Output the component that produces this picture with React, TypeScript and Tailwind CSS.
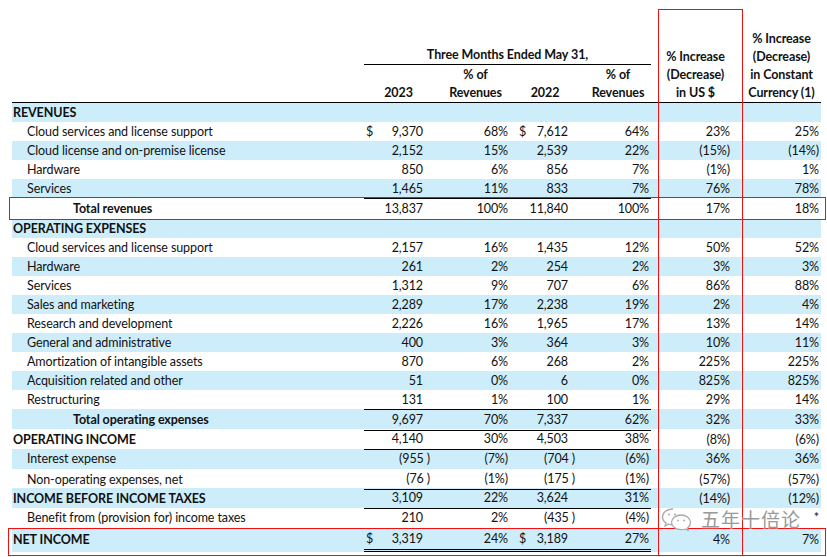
import React from 'react';

type Row = {
  label: string;
  kind: 'section' | 'item' | 'total';
  blue: boolean;
  h: string;
  v23?: string;
  p23?: string;
  v22?: string;
  p22?: string;
  us?: string;
  cc?: string;
  dollar?: boolean;
  top?: boolean;
  bottom?: boolean;
  double?: boolean;
};

const rows: Row[] = [
  { label: 'REVENUES', kind: 'section', blue: true, h: 'h-[19px]' },
  { label: 'Cloud services and license support', kind: 'item', blue: false, h: 'h-[19px]', v23: '9,370', p23: '68%', v22: '7,612', p22: '64%', us: '23%', cc: '25%', dollar: true },
  { label: 'Cloud license and on-premise license', kind: 'item', blue: true, h: 'h-[19px]', v23: '2,152', p23: '15%', v22: '2,539', p22: '22%', us: '(15%)', cc: '(14%)' },
  { label: 'Hardware', kind: 'item', blue: false, h: 'h-[19px]', v23: '850', p23: '6%', v22: '856', p22: '7%', us: '(1%)', cc: '1%' },
  { label: 'Services', kind: 'item', blue: true, h: 'h-[19px]', v23: '1,465', p23: '11%', v22: '833', p22: '7%', us: '76%', cc: '78%' },
  { label: 'Total revenues', kind: 'total', blue: false, h: 'h-[21px]', v23: '13,837', p23: '100%', v22: '11,840', p22: '100%', us: '17%', cc: '18%', top: true, bottom: true },
  { label: 'OPERATING EXPENSES', kind: 'section', blue: true, h: 'h-[19px]' },
  { label: 'Cloud services and license support', kind: 'item', blue: false, h: 'h-[19px]', v23: '2,157', p23: '16%', v22: '1,435', p22: '12%', us: '50%', cc: '52%' },
  { label: 'Hardware', kind: 'item', blue: true, h: 'h-[19px]', v23: '261', p23: '2%', v22: '254', p22: '2%', us: '3%', cc: '3%' },
  { label: 'Services', kind: 'item', blue: false, h: 'h-[19px]', v23: '1,312', p23: '9%', v22: '707', p22: '6%', us: '86%', cc: '88%' },
  { label: 'Sales and marketing', kind: 'item', blue: true, h: 'h-[19px]', v23: '2,289', p23: '17%', v22: '2,238', p22: '19%', us: '2%', cc: '4%' },
  { label: 'Research and development', kind: 'item', blue: false, h: 'h-[19px]', v23: '2,226', p23: '16%', v22: '1,965', p22: '17%', us: '13%', cc: '14%' },
  { label: 'General and administrative', kind: 'item', blue: true, h: 'h-[19px]', v23: '400', p23: '3%', v22: '364', p22: '3%', us: '10%', cc: '11%' },
  { label: 'Amortization of intangible assets', kind: 'item', blue: false, h: 'h-[19px]', v23: '870', p23: '6%', v22: '268', p22: '2%', us: '225%', cc: '225%' },
  { label: 'Acquisition related and other', kind: 'item', blue: true, h: 'h-[19px]', v23: '51', p23: '0%', v22: '6', p22: '0%', us: '825%', cc: '825%' },
  { label: 'Restructuring', kind: 'item', blue: false, h: 'h-[19px]', v23: '131', p23: '1%', v22: '100', p22: '1%', us: '29%', cc: '14%' },
  { label: 'Total operating expenses', kind: 'total', blue: true, h: 'h-[20px]', v23: '9,697', p23: '70%', v22: '7,337', p22: '62%', us: '32%', cc: '33%', top: true, bottom: true },
  { label: 'OPERATING INCOME', kind: 'section', blue: false, h: 'h-[20px]', v23: '4,140', p23: '30%', v22: '4,503', p22: '38%', us: '(8%)', cc: '(6%)', bottom: true },
  { label: 'Interest expense', kind: 'item', blue: true, h: 'h-[20px]', v23: '(955', p23: '(7%)', v22: '(704', p22: '(6%)', us: '36%', cc: '36%' },
  { label: 'Non-operating expenses, net', kind: 'item', blue: false, h: 'h-[19px]', v23: '(76', p23: '(1%)', v22: '(175', p22: '(1%)', us: '(57%)', cc: '(57%)', bottom: true },
  { label: 'INCOME BEFORE INCOME TAXES', kind: 'section', blue: true, h: 'h-[20px]', v23: '3,109', p23: '22%', v22: '3,624', p22: '31%', us: '(14%)', cc: '(12%)', bottom: true },
  { label: 'Benefit from (provision for) income taxes', kind: 'item', blue: false, h: 'h-[20px]', v23: '210', p23: '2%', v22: '(435', p22: '(4%)', us: '', cc: '*' },
  { label: 'NET INCOME', kind: 'section', blue: true, h: 'h-[24px]', v23: '3,319', p23: '24%', v22: '3,189', p22: '27%', us: '4%', cc: '7%', dollar: true, double: true },
];

const cols = 'grid grid-cols-[352px_66px_85px_60px_76px_91px_79px]';

function clsx(...a: (string | false | undefined)[]) {
  return a.filter(Boolean).join(' ');
}

// accounting-style negatives: closing paren hangs past the digits
function Amount({ v }: { v?: string }) {
  if (!v) return null;
  if (v.startsWith('(')) {
    return (
      <span>
        {v}
        <span className="ml-[3px] -mr-[7px]">)</span>
      </span>
    );
  }
  return <span>{v}</span>;
}

function TableRow({ r }: { r: Row }) {
  const line = clsx(
    r.top && 'border-t border-black',
    r.bottom && 'border-b border-black',
    r.double && 'border-b-[3px] border-double border-black'
  );
  return (
    <div className={clsx(cols, r.h, r.blue ? 'bg-[#cdedfb]' : 'bg-white')}>
      <div
        className={clsx(
          'flex items-center whitespace-nowrap pt-[1px]',
          r.kind === 'section' && 'pl-[1px] font-bold',
          r.kind === 'item' && 'pl-[15px]',
          r.kind === 'total' && 'pl-[61px] font-bold'
        )}
      >
        {r.label}
      </div>
      <div className={clsx('flex items-center justify-between pl-[2px] pr-[7px] pt-[1px]', line)}>
        <span>{r.dollar ? '$' : ''}</span>
        <Amount v={r.v23} />
      </div>
      <div className={clsx('flex items-center justify-end pr-[7px] pt-[1px]', line)}>{r.p23}</div>
      <div className={clsx('flex items-center justify-between pl-[4px] pr-[7px] pt-[1px]', line)}>
        <span>{r.dollar ? '$' : ''}</span>
        <Amount v={r.v22} />
      </div>
      <div className={clsx('flex items-center justify-end pr-[2px] pt-[1px]', line)}>{r.p22}</div>
      <div className="flex items-center justify-end pr-[12px] pt-[1px]">{r.us}</div>
      <div className="flex items-center justify-end pr-[2px] pt-[1px]">{r.cc}</div>
    </div>
  );
}

function WeChatMark() {
  return (
    <svg width="32" height="24" viewBox="0 0 32 24" fill="none" stroke="#a8a8a8" strokeWidth="1.3">
      <path d="M12 2C6 2 1.5 5.6 1.5 10c0 2.5 1.4 4.6 3.6 6l-1 3 3.4-1.8c1.4.4 2.9.6 4.5.6" fill="#ffffff" />
      <path d="M20 8c5.2 0 9.5 3.3 9.5 7.5 0 2.2-1.2 4.1-3 5.5l.8 2.5-2.9-1.5c-1.4.4-2.8.6-4.4.6-5.2 0-9.5-3.3-9.5-7.1S14.8 8 20 8z" fill="#ffffff" />
      <circle cx="8" cy="7.5" r="1" fill="#a8a8a8" stroke="none" />
      <circle cx="14" cy="7.5" r="1" fill="#a8a8a8" stroke="none" />
      <circle cx="17" cy="13.5" r="0.9" fill="#a8a8a8" stroke="none" />
      <circle cx="23" cy="13.5" r="0.9" fill="#a8a8a8" stroke="none" />
    </svg>
  );
}

export default function App() {
  return (
    <div className="relative h-[557px] w-[827px] overflow-hidden bg-white font-['Lato',sans-serif] text-[12.5px] tracking-[-0.1px] text-[#111111]">
      <div className="ml-[12px] w-[809px]">
        {/* header */}
        <div className={clsx(cols, 'h-[103px] items-end border-b border-black font-bold leading-[18px]')}>
          <div />
          <div className="col-span-4 flex flex-col">
            <div className="border-b border-black pt-[1px] text-center">Three Months Ended May 31,</div>
            <div className="grid grid-cols-[66px_85px_60px_76px] pt-[1px]">
              <div className="flex flex-col items-center justify-end pl-[3px]">2023</div>
              <div className="flex flex-col items-center pl-[6px]">
                <span>% of</span>
                <span>Revenues</span>
              </div>
              <div className="flex flex-col items-center justify-end">2022</div>
              <div className="flex flex-col items-center pl-[10px]">
                <span>% of</span>
                <span>Revenues</span>
              </div>
            </div>
          </div>
          <div className="flex flex-col items-center pr-[2px]">
            <span>% Increase</span>
            <span>(Decrease)</span>
            <span>in US $</span>
          </div>
          <div className="flex flex-col items-center">
            <span>% Increase</span>
            <span>(Decrease)</span>
            <span>in Constant</span>
            <span>Currency (1)</span>
          </div>
        </div>
        {rows.map((r, i) => (
          <TableRow key={i} r={r} />
        ))}
      </div>

      {/* red highlight boxes */}
      <div className="absolute left-[658px] top-[9px] h-[547px] w-[85px] border border-[#f01010]" />
      <div className="absolute left-[9px] top-[197px] h-[23px] w-[817px] border border-[#f01010]" />
      <div className="absolute left-[8px] top-[528px] h-[28px] w-[818px] border border-[#f01010]" />

      {/* watermark */}
      <div className="absolute left-[661px] top-[505px] flex items-center gap-[8px]">
        <WeChatMark />
        <span className="font-['Noto_Sans_CJK_SC',sans-serif] text-[19px] tracking-[1px] text-[#999999] [text-shadow:0_0_2px_#ffffff]">
          五年十倍论
        </span>
      </div>
    </div>
  );
}
